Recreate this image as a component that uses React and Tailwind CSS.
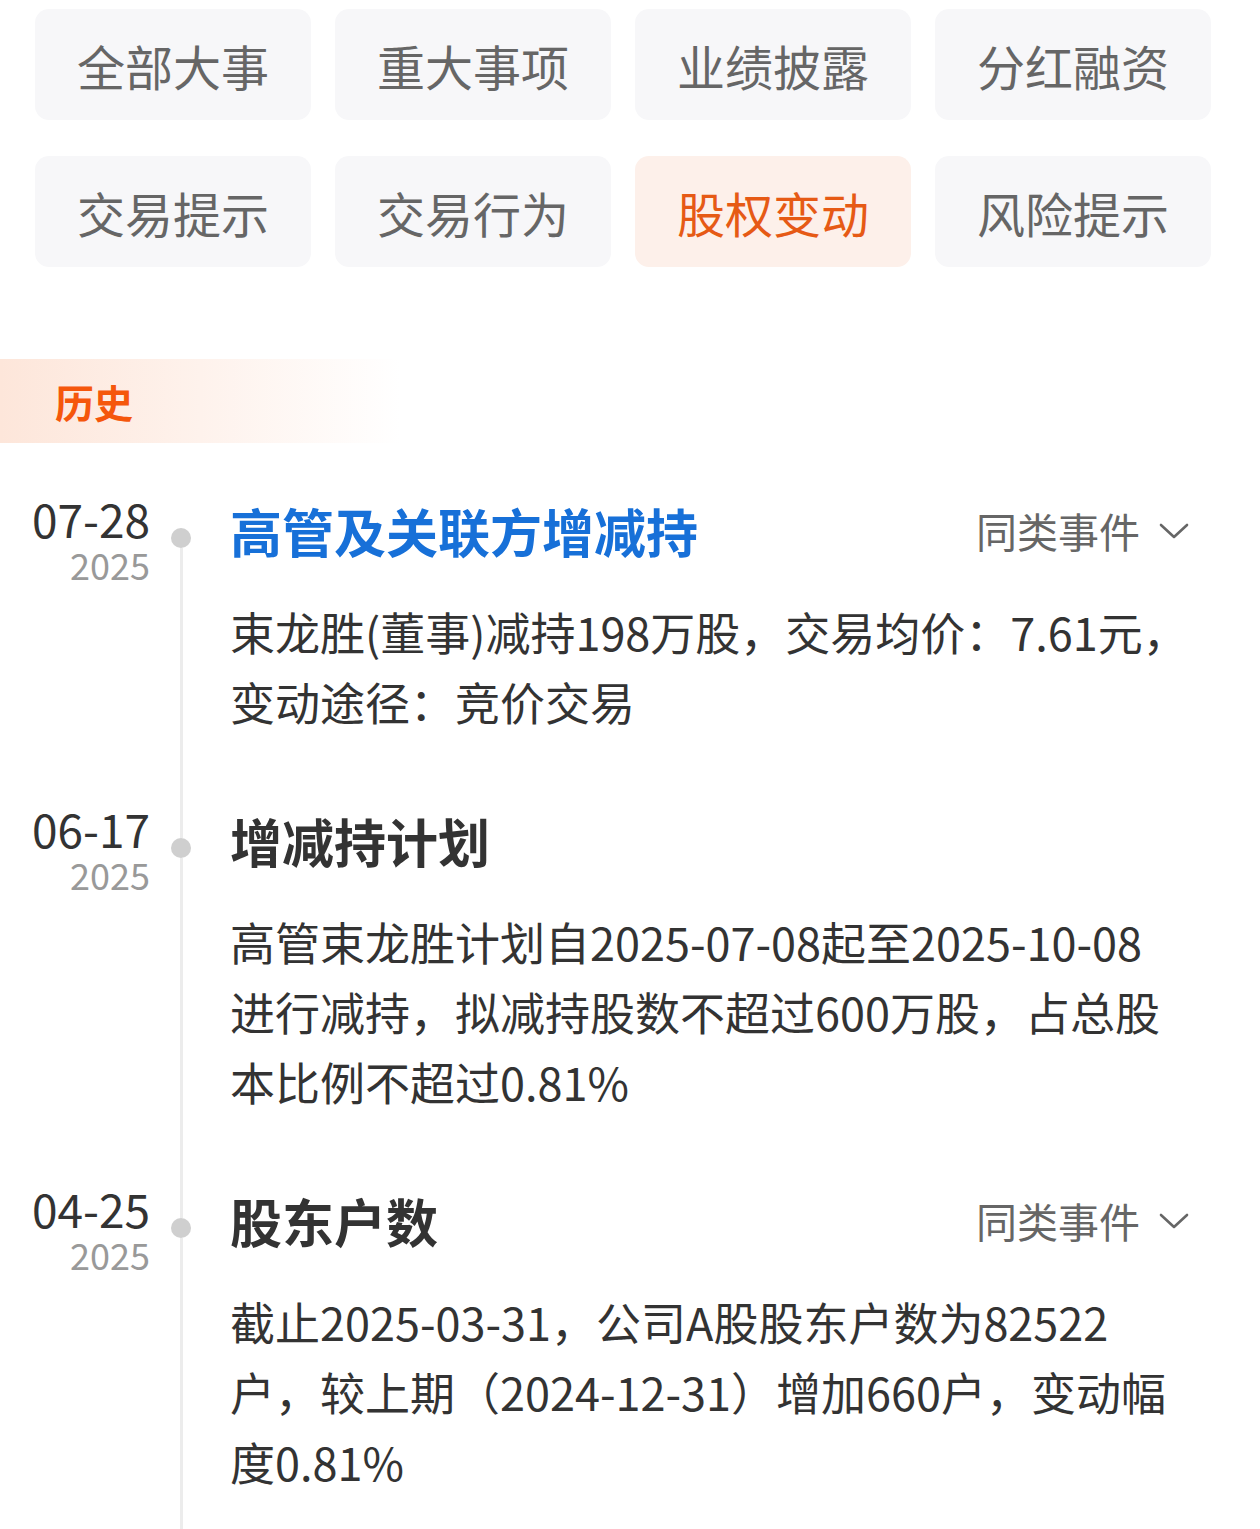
import React from 'react';

const tabs = [
  { label: '全部大事' },
  { label: '重大事项' },
  { label: '业绩披露' },
  { label: '分红融资' },
  { label: '交易提示' },
  { label: '交易行为' },
  { label: '股权变动', active: true },
  { label: '风险提示' },
];

const events = [
  {
    md: '07-28',
    year: '2025',
    title: '高管及关联方增减持',
    highlight: true,
    similar: true,
    bodyWidth: 'max-w-[962px]',
    body: '束龙胜(董事)减持198万股，交易均价：7.61元，变动途径：竞价交易',
  },
  {
    md: '06-17',
    year: '2025',
    title: '增减持计划',
    bodyWidth: 'max-w-[945px]',
    body: '高管束龙胜计划自2025-07-08起至2025-10-08进行减持，拟减持股数不超过600万股，占总股本比例不超过0.81%',
  },
  {
    md: '04-25',
    year: '2025',
    title: '股东户数',
    similar: true,
    bodyWidth: 'max-w-[962px]',
    body: '截止2025-03-31，公司A股股东户数为82522户，较上期（2024-12-31）增加660户，变动幅度0.81%',
  },
];

const Chevron = () => (
  <svg width="32" height="18" viewBox="0 0 32 18" fill="none">
    <polyline points="3,3 16,15 29,3" stroke="#666" strokeWidth="2.6" strokeLinecap="round" strokeLinejoin="round" />
  </svg>
);

const EventItem = ({ item, first }) => (
  <div className="flex">
    {/* date column */}
    <div className="w-[150px] shrink-0 flex flex-col items-end -mt-[6px]">
      <span className="text-[46px] leading-[50px] text-[#333]">{item.md}</span>
      <span className="text-[36px] leading-[42px] text-[#999]">{item.year}</span>
    </div>

    {/* timeline column */}
    <div className="w-[62px] shrink-0 flex flex-col items-center">
      <div className={`w-[3px] h-[29px] ${first ? 'bg-transparent' : 'bg-[#ececec]'}`} />
      <div className="w-[20px] h-[20px] rounded-full bg-[#cfcfcf]" />
      <div className="w-[3px] flex-1 bg-[#ececec]" />
    </div>

    {/* content */}
    <div className="ml-[18px] w-[962px] pb-[72px]">
      <div className="flex items-center justify-between h-[64px]">
        <h3
          className={`text-[52px] leading-[64px] font-bold ${
            item.highlight ? 'text-[#1770d8]' : 'text-[#333]'
          }`}
        >
          {item.title}
        </h3>
        {item.similar && (
          <div className="flex items-center gap-[18px] pr-[2px] text-[41px] text-[#666]">
            <span>同类事件</span>
            <Chevron />
          </div>
        )}
      </div>
      <p className={`mt-[34px] ${item.bodyWidth} text-[45px] leading-[70px] text-[#333]`}>{item.body}</p>
    </div>
  </div>
);

export default function App() {
  return (
    <div
      className="w-[1260px] bg-white overflow-hidden"
      style={{ fontFamily: '"Noto Sans CJK SC", "Noto Sans", sans-serif' }}
    >
      {/* category tabs */}
      <div className="pl-[35px] pr-[49px] pt-[9px] grid grid-cols-4 gap-x-[24px] gap-y-[36px]">
        {tabs.map((t) => (
          <div
            key={t.label}
            className={`h-[111px] rounded-[14px] flex items-center justify-center text-[48px] ${
              t.active ? 'bg-[#fdf0ea] text-[#e65a15]' : 'bg-[#f7f7f9] text-[#666]'
            }`}
          >
            {t.label}
          </div>
        ))}
      </div>

      {/* history header */}
      <div className="mt-[92px] h-[84px] w-[400px] flex items-center pl-[55px] bg-linear-to-r from-[#fde6da] via-[#fef2ec] to-white">
        <span className="text-[39px] font-bold text-[#f5570c]">历史</span>
      </div>

      {/* timeline */}
      <div className="mt-[56px]">
        {events.map((e, i) => (
          <EventItem key={e.md} item={e} first={i === 0} />
        ))}
      </div>
    </div>
  );
}
